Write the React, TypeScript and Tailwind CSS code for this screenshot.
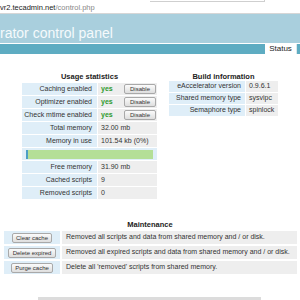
const usage = [
  { label: 'Caching enabled', value: 'yes', button: true },
  { label: 'Optimizer enabled', value: 'yes', button: true },
  { label: 'Check mtime enabled', value: 'yes', button: true },
  { label: 'Total memory', value: '32.00 mb' },
  { label: 'Memory in use', value: '101.54 kb (0%)' },
  { label: 'bar', value: '' },
  { label: 'Free memory', value: '31.90 mb' },
  { label: 'Cached scripts', value: '9' },
  { label: 'Removed scripts', value: '0' },
];

const build = [
  { label: 'eAccelerator version', value: '0.9.6.1' },
  { label: 'Shared memory type', value: 'sysvipc' },
  { label: 'Semaphore type', value: 'spinlock' },
];

const maintenance = [
  { button: 'Clear cache', width: 'w-[40px]', text: 'Removed all scripts and data from shared memory and / or disk.' },
  { button: 'Delete expired', width: 'w-[48px]', text: 'Removed all expired scripts and data from shared memory and / or disk.' },
  { button: 'Purge cache', width: 'w-[42px]', text: "Delete all 'removed' scripts from shared memory." },
];

const SmallButton = ({ label, className }: { label: string; className: string }) => (
  <button className={`flex h-[10px] items-center justify-center rounded-[2px] border border-[#a9a9a9] bg-gradient-to-b from-[#fbfbfb] to-[#dedede] text-[6px] leading-none text-[#333] ${className}`}>
    {label}
  </button>
);

const App = () => {
  return (
    <div className="h-[300px] w-[300px] overflow-hidden bg-white font-['Liberation_Sans',Arial,sans-serif] text-[7px] text-[#333]">
      {/* address bar */}
      <div className="h-[14px] border-b border-[#d6d6d6]">
        <div className="ml-[150px] h-[2px] w-[115px] border-b border-r border-[#cfcfcf]" />
        <div className="pt-[1px] text-[7.5px] leading-[9px] text-[#222]">
          vr2.tecadmin.net<span className="text-[#888]">/control.php</span>
        </div>
      </div>

      {/* header */}
      <div className="flex h-[29px] items-end bg-[#a9cfdd] pb-[3px]">
        <div className="text-[14px] leading-[14px] text-[#f5fafc]">rator control panel</div>
      </div>
      <div className="flex h-[11px] border-t border-white">
        <div className="w-[265px] bg-[#5eacc2]" />
        <div className="flex w-[31px] items-center justify-center bg-white text-[8px] leading-none text-[#222]">Status</div>
        <div className="w-[1px] bg-[#dde8ec]" />
        <div className="flex-1 bg-[#5eacc2]" />
      </div>

      {/* statistics */}
      <div className="mt-[18px] flex pl-[22px]">
        <div className="w-[135px]">
          <div className="h-[11px] text-center text-[7.5px] font-bold leading-[9px] text-[#222]">Usage statistics</div>
          <div className="flex flex-col gap-[1px]">
            {usage.map((row) =>
              row.label === 'bar' ? (
                <div key={row.label} className="flex h-[12px] items-center bg-[#dfeef8] px-[4px]">
                  <div className="flex h-[9px] w-[128px]">
                    <div className="w-[2px] bg-[#4b9ec6]" />
                    <div className="flex-1 bg-[#b4df97]" />
                  </div>
                </div>
              ) : (
                <div key={row.label} className="flex h-[12px] gap-[1px]">
                  <div className="flex w-[75px] items-center justify-end bg-[#dfeef8] pr-[5px]">{row.label}</div>
                  <div className="flex flex-1 items-center bg-[#eeeeee] pl-[3px]">
                    {row.button ? (
                      <>
                        <span className="w-[23px] font-bold text-[#2e9a2e]">{row.value}</span>
                        <SmallButton label="Disable" className="w-[32px]" />
                      </>
                    ) : (
                      row.value
                    )}
                  </div>
                </div>
              ),
            )}
          </div>
        </div>

        <div className="ml-[12px] w-[109px]">
          <div className="h-[9px] text-center text-[7.5px] font-bold leading-[9px] text-[#222]">Build information</div>
          <div className="flex flex-col gap-[1px]">
            {build.map((row) => (
              <div key={row.label} className="flex h-[11px] gap-[1px]">
                <div className="flex w-[76px] items-center justify-end bg-[#dfeef8] pr-[4px]">{row.label}</div>
                <div className="flex flex-1 items-center bg-[#eeeeee] pl-[3px]">{row.value}</div>
              </div>
            ))}
          </div>
        </div>
      </div>

      {/* maintenance */}
      <div className="mt-[21px] px-[4px]">
        <div className="h-[11px] text-center text-[7.5px] font-bold leading-[9px] text-[#222]">Maintenance</div>
        <div className="flex w-[293px] flex-col gap-[2px]">
          {maintenance.map((row) => (
            <div key={row.button} className="flex h-[13px] gap-[2px]">
              <div className="flex w-[56px] items-center justify-center bg-[#dfeef8]">
                <SmallButton label={row.button} className={row.width} />
              </div>
              <div className="flex flex-1 items-center bg-[#eeeeee] pl-[4px]">{row.text}</div>
            </div>
          ))}
        </div>
      </div>

      {/* horizontal scrollbar */}
      <div className="ml-[38px] mt-[23px] h-[3px] w-[223px] bg-[#dcdcdc]" />
    </div>
  );
};

export default App;
